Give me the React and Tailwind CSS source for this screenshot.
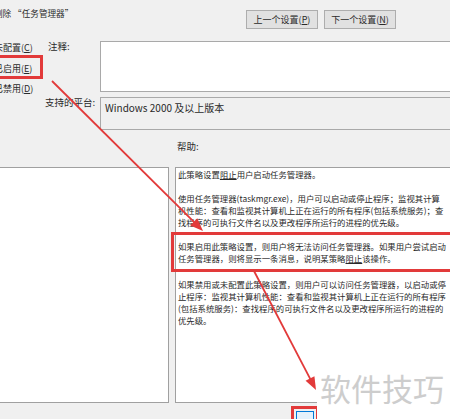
import React from "react";

const RED = "#e23a3a";

function arrowHead(x1, y1, x2, y2, len = 13, half = 5) {
  const dx = x2 - x1;
  const dy = y2 - y1;
  const d = Math.hypot(dx, dy);
  const ux = dx / d;
  const uy = dy / d;
  const bx = x2 - ux * len;
  const by = y2 - uy * len;
  const px = -uy * half;
  const py = ux * half;
  return `${x2},${y2} ${bx + px},${by + py} ${bx - px},${by - py}`;
}

function Arrow({ x1, y1, x2, y2 }) {
  const d = Math.hypot(x2 - x1, y2 - y1);
  const ex = x2 - ((x2 - x1) / d) * 10;
  const ey = y2 - ((y2 - y1) / d) * 10;
  return (
    <g>
      <line x1={x1} y1={y1} x2={ex} y2={ey} stroke={RED} strokeWidth="1.8" />
      <polygon points={arrowHead(x1, y1, x2, y2)} fill={RED} />
    </g>
  );
}

function Btn({ children }) {
  return (
    <div className="mt-[10px] flex h-[19px] w-[72px] shrink-0 items-center justify-center border border-[#adadad] bg-[#e1e1e1] text-[9px] leading-none">
      {children}
    </div>
  );
}

export default function App() {
  return (
    <div
      className="relative h-[419px] w-[450px] overflow-hidden bg-[#f0f0f0] text-[#2a2a2a]"
      style={{ fontFamily: '"Noto Sans CJK SC", "Noto Sans", sans-serif' }}
    >
      {/* top row */}
      <div className="flex h-[41px] items-start">
        <div className="-ml-[6px] w-[252px] shrink-0 pt-[8px] text-[8.6px] leading-[10px]">
          删除 “任务管理器”
        </div>
        <div className="flex gap-[6px]">
          <Btn>
            上一个设置(<u>P</u>)
          </Btn>
          <Btn>
            下一个设置(<u>N</u>)
          </Btn>
        </div>
      </div>

      {/* options row */}
      <div className="flex h-[89px]">
        <div className="-ml-[6px] flex w-[51px] shrink-0 flex-col gap-[6.5px] text-[9px] leading-[14px]">
          <div>
            未配置(<u>C</u>)
          </div>
          <div>
            已启用(<u>E</u>)
          </div>
          <div>
            已禁用(<u>D</u>)
          </div>
        </div>
        <div className="flex w-[55px] shrink-0 flex-col text-[9.5px] leading-[10px]">
          <div className="h-[56px] pl-[3px]">注释:</div>
          <div>支持的平台:</div>
        </div>
        <div className="-mr-[6px] flex flex-1 flex-col gap-[5px]">
          <div className="h-[51px] border border-[#a9a9a9] bg-white" />
          <div className="h-[33px] border border-[#a9a9a9] bg-[#f0f0f0] pl-[4px] pt-[3px] text-[10px] leading-[14px]">
            Windows 2000 及以上版本
          </div>
        </div>
      </div>

      {/* help label */}
      <div className="mt-[11px] pl-[177px] text-[9.5px] leading-[10px]">帮助:</div>

      {/* panels */}
      <div className="mt-[16px] flex h-[236px] gap-[6px]">
        <div className="-ml-[2px] w-[171px] shrink-0 border border-[#a0a0a0] bg-white" />
        <div className="w-[300px] shrink-0 overflow-hidden whitespace-nowrap border border-[#a0a0a0] bg-white pl-[2px] text-[8.4px] leading-[12px]">
          <p>
            此策略设置<u>阻止</u>用户启动任务管理器。
          </p>
          <p className="mt-[12px]">使用任务管理器(taskmgr.exe)，用户可以启动或停止程序；监视其计算</p>
          <p>机性能：查看和监视其计算机上正在运行的所有程序(包括系统服务)；查</p>
          <p>找程序的可执行文件名以及更改程序所运行的进程的优先级。</p>
          <p className="mt-[12px]">如果启用此策略设置，则用户将无法访问任务管理器。如果用户尝试启动</p>
          <p>
            任务管理器，则将显示一条消息，说明某策略<u>阻止</u>该操作。
          </p>
          <p className="mt-[14px]">如果禁用或未配置此策略设置，则用户可以访问任务管理器，以启动或停</p>
          <p>止程序：监视其计算机性能：查看和监视其计算机上正在运行的所有程序</p>
          <p>(包括系统服务)：查找程序的可执行文件名以及更改程序所运行的进程的</p>
          <p>优先级。</p>
        </div>
      </div>

      {/* red annotation boxes */}
      <div className="absolute left-[-3px] top-[55px] h-[24px] w-[46px] border-[3px] border-[#e23a3a]" />
      <div className="absolute left-[171px] right-[-5px] top-[232px] h-[40px] border-[3px] border-[#e23a3a]" />
      <div className="absolute left-[291px] top-[406px] h-[20px] w-[28px] border-[3px] border-[#e23a3a] bg-[#f0f0f0] p-[2px]">
        <div className="h-full w-full border border-[#0078d7] bg-[#e5f1fb]" />
      </div>

      {/* watermark */}
      <div className="absolute bottom-0 left-[317px] right-0 top-[364px] bg-white pl-[3px] pt-[4px] text-[31px] leading-[40px] text-[#cdcdcd]">
        软件技巧
      </div>

      {/* arrows */}
      <svg className="pointer-events-none absolute left-0 top-0" width="450" height="419">
        <Arrow x1={52} y1={81} x2={203} y2={231} />
        <Arrow x1={254} y1={271} x2={316} y2={390} />
      </svg>
    </div>
  );
}
